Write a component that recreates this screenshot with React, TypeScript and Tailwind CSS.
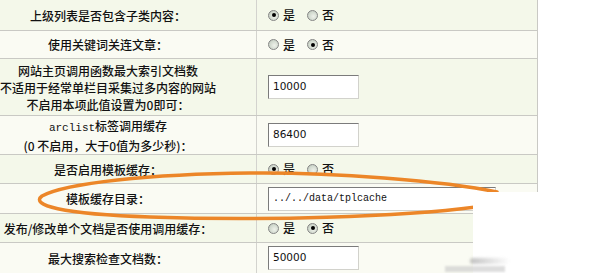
import React from "react";

const cjk = { fontFamily: '"Noto Sans CJK SC", "Noto Sans", sans-serif' };

function Radio({ checked }: { checked?: boolean }) {
  return (
    <span className="relative inline-flex h-[11px] w-[11px] shrink-0 items-center justify-center rounded-full border border-[#858585] bg-[radial-gradient(circle_at_60%_60%,#eef1ea_0%,#d0d8cd_60%,#b3bcb0_100%)]">
      {checked && <span className="h-[4px] w-[4px] rounded-full bg-[#000]" />}
    </span>
  );
}

function YesNo({ yes }: { yes: boolean }) {
  return (
    <div className="flex items-center text-[12px] font-medium text-[#111]" style={cjk}>
      <Radio checked={yes} />
      <span className="ml-[4px]">是</span>
      <span className="ml-[12px]" />
      <Radio checked={!yes} />
      <span className="ml-[4px]">否</span>
    </div>
  );
}

function Input({ value, w, mono }: { value: string; w: string; mono?: boolean }) {
  return (
    <div
      className={`flex h-[24px] items-center border border-t-[#7b7b7b] border-l-[#7b7b7b] border-r-[#d2d2cc] border-b-[#d2d2cc] bg-white pl-[4px] text-[#111] ${w} ${
        mono ? "text-[10px]" : "text-[10.5px]"
      }`}
      style={{
        fontFamily: mono ? '"Liberation Mono", monospace' : '"DejaVu Sans", sans-serif',
      }}
    >
      {value}
    </div>
  );
}

function Row({
  h,
  bg,
  left,
  right,
}: {
  h: string;
  bg: string;
  left: React.ReactNode;
  right: React.ReactNode;
}) {
  return (
    <div className={`flex ${h} ${bg} border-b border-[#c9c9c4]`}>
      <div
        className="flex w-[297px] shrink-0 flex-col items-center justify-center border-r border-[#d3d3ce] text-center text-[12px] font-medium leading-[17px] text-[#111]"
        style={cjk}
      >
        {left}
      </div>
      <div className="flex flex-1 items-center pl-[11px]">{right}</div>
    </div>
  );
}

export default function App() {
  const odd = "bg-[#f4f8ea]";
  const even = "bg-[#fafbf3]";
  return (
    <div className="relative h-[273px] w-[613px] overflow-hidden bg-white">
      <div className="ml-[-40px] w-[578px] border-r border-[#c9c9c4]">
        <Row h="h-[31px]" bg={odd} left={<span>上级列表是否包含子类内容：</span>} right={<YesNo yes={true} />} />
        <Row h="h-[28px]" bg={even} left={<span>使用关键词关连文章：</span>} right={<YesNo yes={false} />} />
        <Row
          h="h-[57px]"
          bg={odd}
          left={
            <>
              <span>网站主页调用函数最大索引文档数</span>
              <span className="whitespace-nowrap">不适用于经常单栏目采集过多内容的网站</span>
              <span>不启用本项此值设置为0即可：</span>
            </>
          }
          right={<Input value="10000" w="w-[91px]" />}
        />
        <Row
          h="h-[39px]"
          bg={even}
          left={
            <>
              <span>
                <span style={{ fontFamily: '"Liberation Mono", monospace' }} className="text-[11px] font-normal">
                  arclist
                </span>
                标签调用缓存
              </span>
              <span>(0 不启用，大于0值为多少秒)：</span>
            </>
          }
          right={<Input value="86400" w="w-[91px]" />}
        />
        <Row h="h-[29px]" bg={odd} left={<span>是否启用模板缓存：</span>} right={<YesNo yes={true} />} />
        <Row
          h="h-[30px]"
          bg={even}
          left={<span>模板缓存目录：</span>}
          right={<Input value="../../data/tplcache" w="w-[228px]" mono />}
        />
        <Row
          h="h-[29px]"
          bg={odd}
          left={<span className="whitespace-nowrap">发布/修改单个文档是否使用调用缓存：</span>}
          right={<YesNo yes={false} />}
        />
        <Row h="h-[31px]" bg={even} left={<span>最大搜索检查文档数：</span>} right={<Input value="50000" w="w-[91px]" />} />
      </div>

      <svg className="pointer-events-none absolute left-0 top-0" width="613" height="273" viewBox="0 0 613 273">
        <path
          d="M 497 192 C 445 181, 330 172, 250 173 C 150 174, 66 183, 42 196 C 30 205, 60 214, 150 217 C 262 221, 400 217, 476 207"
          fill="none"
          stroke="#ec8628"
          strokeWidth="3.5"
          strokeLinecap="round"
        />
      </svg>

      <div className="absolute bottom-0 left-[473px] right-0 top-[192px] bg-white" />
      <div className="absolute left-[470px] top-[258px] h-[6px] w-[40px] rounded-full bg-gradient-to-r from-[#9a9a9a] to-transparent opacity-60 blur-[1.5px]" />
      <div className="absolute left-[445px] top-[266px] h-[6px] w-[60px] bg-[#c8c8c8] opacity-60 blur-[1px]" />
    </div>
  );
}
